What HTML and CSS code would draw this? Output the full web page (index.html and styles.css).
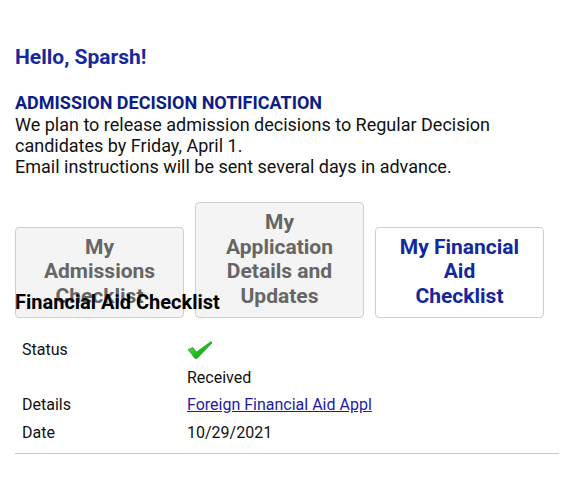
FILE: index.html
```html
<!DOCTYPE html>
<html>
<head>
<meta charset="utf-8">
<link rel="stylesheet" href="styles.css">
</head>
<body>
<div class="page">
  <h1 class="greeting">Hello, Sparsh!</h1>
  <h2 class="notice-title">ADMISSION DECISION NOTIFICATION</h2>
  <p class="notice">We plan to release admission decisions to Regular Decision candidates by Friday, April 1.<br>Email instructions will be sent several days in advance.</p>
  <div class="tabs">
    <div class="tab">My<br>Admissions<br>Checklist</div>
    <div class="tab">My<br>Application<br>Details and<br>Updates</div>
    <div class="tab active">My Financial<br>Aid<br>Checklist</div>
  </div>
  <h3 class="section-title">Financial Aid Checklist</h3>
  <div class="details">
    <div class="label">Status</div>
    <div class="value">
      <svg class="check" width="26" height="22" viewBox="0 0 26 22">
        <defs>
          <linearGradient id="g" x1="0" y1="0" x2="1" y2="1">
            <stop offset="0" stop-color="#7be36b"/>
            <stop offset="0.5" stop-color="#1fbf1f"/>
            <stop offset="1" stop-color="#0e8a12"/>
          </linearGradient>
        </defs>
        <path d="M1 10.5 L6 8.5 L9.5 13 L24 2.5 L25 4 L10 19.5 L8 19.5 Z" fill="url(#g)" stroke="#1a8f1a" stroke-width="0.6" stroke-linejoin="round"/>
      </svg><br>Received
    </div>
    <div class="label">Details</div>
    <div class="value"><a href="#">Foreign Financial Aid Appl</a></div>
    <div class="label">Date</div>
    <div class="value">10/29/2021</div>
  </div>
  <div class="rule"></div>
</div>
</body>
</html>
```
FILE: styles.css
```css
html, body {
  margin: 0;
  padding: 0;
  background: #ffffff;
}
body {
  font-family: Roboto, "Liberation Sans", Arial, sans-serif;
  color: #111111;
}
.page {
  padding: 44px 15px 0 15px;
}
.greeting {
  margin: 0;
  font-size: 21px;
  line-height: 26px;
  font-weight: 700;
  color: #16299c;
}
.notice-title {
  margin: 22px 0 0 0;
  font-size: 18px;
  line-height: 21px;
  font-weight: 700;
  color: #0c1d85;
}
.notice {
  margin: 1px 0 0 0;
  font-size: 18px;
  line-height: 21px;
  color: #111111;
}
.tabs {
  display: flex;
  align-items: flex-end;
  gap: 11px;
  margin-top: 25px;
}
.tab {
  width: 169px;
  box-sizing: border-box;
  padding: 7px 8px 9px 8px;
  border: 1px solid #cfcfcf;
  border-radius: 4px;
  background: #f4f4f4;
  color: #666666;
  font-size: 21px;
  line-height: 24.5px;
  font-weight: 700;
  text-align: center;
}
.tab.active {
  background: #ffffff;
  color: #13289b;
}
.section-title {
  margin: -28px 0 0 0;
  font-size: 20px;
  line-height: 24px;
  font-weight: 700;
  color: #000000;
}
.details {
  display: grid;
  grid-template-columns: 165px 1fr;
  margin-top: 22px;
  padding-left: 7px;
  font-size: 16px;
  line-height: 27.5px;
  color: #111111;
}
.check {
  vertical-align: middle;
  position: relative;
  top: -1px;
}
.value a {
  color: #1d1ba6;
  text-decoration: underline;
}
.rule {
  margin-top: 7px;
  width: 544px;
  height: 1px;
  background: #c8c8c8;
}
```
